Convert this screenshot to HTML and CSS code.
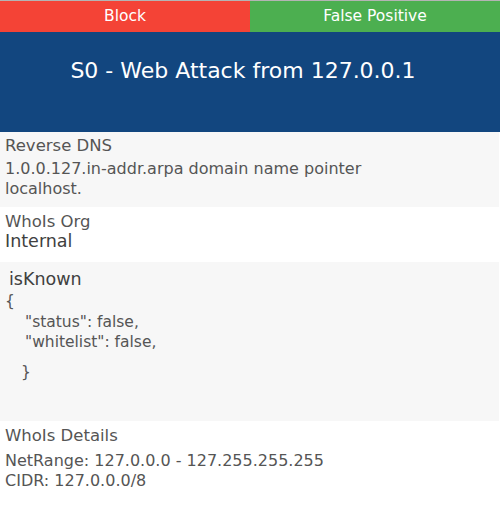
FILE: index.html
```html
<!DOCTYPE html>
<html>
<head>
<meta charset="utf-8">
<link rel="stylesheet" href="styles.css">
</head>
<body>
<div class="page">
  <div class="actions">
    <div class="btn btn-block">Block</div>
    <div class="btn btn-fp">False Positive</div>
  </div>
  <div class="header">
    <div class="title">S0 - Web Attack from 127.0.0.1</div>
  </div>
  <div class="section shaded rdns">
    <div class="label">Reverse DNS</div>
    <div class="text">1.0.0.127.in-addr.arpa domain name pointer<br>localhost.</div>
  </div>
  <div class="section org">
    <div class="label">WhoIs Org</div>
    <div class="strong">Internal</div>
  </div>
  <div class="section shaded known">
    <div class="strong known-title">isKnown</div>
    <div class="json">
      <div class="brace-open">{</div>
      <div class="json-row">"status": false,</div>
      <div class="json-row">"whitelist": false,</div>
      <div class="brace-close">}</div>
    </div>
  </div>
  <div class="section details">
    <div class="label">WhoIs Details</div>
    <div class="text details-text">NetRange: 127.0.0.0 - 127.255.255.255<br>CIDR: 127.0.0.0/8</div>
  </div>
</div>
</body>
</html>
```

FILE: styles.css
```css
html, body {
  margin: 0;
  padding: 0;
  background: #ffffff;
}
body {
  font-family: "DejaVu Sans", sans-serif;
  color: #555555;
}
.page {
  border-top: 1px solid #b4b4b4;
  width: 500px;
  height: 507px;
  overflow: hidden;
  display: flex;
  flex-direction: column;
}
.actions {
  display: flex;
  height: 31px;
}
.btn {
  flex: 1;
  text-align: center;
  color: #ffffff;
  font-size: 15.5px;
  line-height: 31px;
}
.btn-block {
  background: #f44336;
}
.btn-fp {
  background: #4caf50;
}
.header {
  background: #12467f;
  height: 100px;
  box-sizing: border-box;
  padding: 26px 14px 0 0;
}
.title {
  color: #ffffff;
  font-size: 22px;
  line-height: 26px;
  text-align: center;
}
.section {
  width: 499px;
  box-sizing: border-box;
  padding: 0 6px 0 5px;
}
.shaded {
  background: #f7f7f7;
}
.label {
  font-size: 16.5px;
  line-height: 20px;
  color: #555555;
}
.text {
  font-size: 16px;
  line-height: 20px;
  color: #555555;
}
.strong {
  font-size: 17.5px;
  line-height: 18px;
  color: #404040;
}
.rdns {
  padding-top: 4px;
  padding-bottom: 8px;
}
.rdns .text {
  margin-top: 3px;
}
.org {
  padding-top: 5px;
  height: 55px;
}
.known {
  padding-top: 7px;
  height: 159px;
}
.known-title {
  line-height: 20px;
  padding-left: 4px;
}
.json {
  margin-top: 2px;
  font-size: 15.5px;
  color: #555555;
}
.brace-open {
  line-height: 21px;
}
.json-row {
  line-height: 20px;
  padding-left: 20px;
}
.brace-close {
  line-height: 20px;
  margin-top: 10px;
  padding-left: 16px;
}
.details {
  padding-top: 5px;
  flex: 1;
}
.details-text {
  margin-top: 5px;
}
```
